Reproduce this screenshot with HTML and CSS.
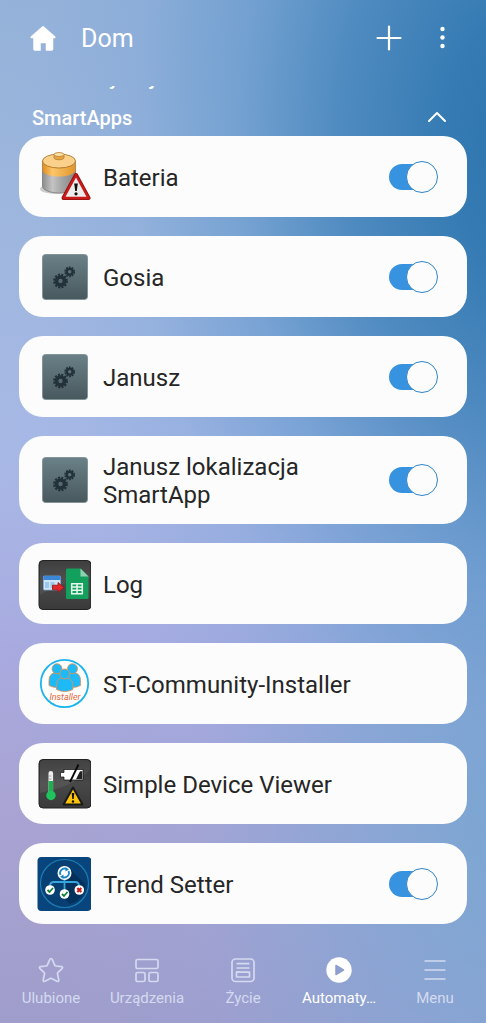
FILE: index.html
```html
<!DOCTYPE html>
<html lang="pl">

<head>
    <meta charset="UTF-8">
    <meta name="viewport" content="width=device-width, initial-scale=1.0">
    <title>Dom</title>
    <link rel="stylesheet" href="styles.css">
</head>

<body>
    <!-- shared icon parts -->
    <svg class="defs" width="0" height="0" aria-hidden="true">
        <defs>
            <linearGradient id="slate" x1="0" y1="0" x2="0" y2="1">
                <stop offset="0" stop-color="#6a8187" />
                <stop offset="1" stop-color="#48595e" />
            </linearGradient>
            <linearGradient id="dark" x1="0" y1="0" x2="0" y2="1">
                <stop offset="0" stop-color="#333" />
                <stop offset="0.5" stop-color="#484848" />
                <stop offset="1" stop-color="#3a3a3a" />
            </linearGradient>
            <linearGradient id="steel" x1="0" y1="0" x2="1" y2="0">
                <stop offset="0" stop-color="#8c8c8c" />
                <stop offset="0.3" stop-color="#c4c4c4" />
                <stop offset="0.6" stop-color="#a3a3a3" />
                <stop offset="1" stop-color="#858585" />
            </linearGradient>
            <linearGradient id="amber" x1="0" y1="0" x2="1" y2="0">
                <stop offset="0" stop-color="#e08c1c" />
                <stop offset="0.3" stop-color="#fbc66a" />
                <stop offset="1" stop-color="#e2952c" />
            </linearGradient>
            <symbol id="gears" viewBox="0 0 54 54">
                <rect x="5.500" y="4.500" width="45" height="45" rx="3" fill="url(#slate)" stroke="#839498" stroke-width="1" />
                <g fill="none" stroke="#22313a">
                    <circle cx="23.500" cy="31" r="4" stroke-width="3.600" />
                    <circle cx="23.500" cy="31" r="6.300" stroke-width="2.200" stroke-dasharray="2.100 1.200" />
                    <circle cx="32.700" cy="21.800" r="2.900" stroke-width="2.300" />
                    <circle cx="32.700" cy="21.800" r="4.500" stroke-width="1.800" stroke-dasharray="1.800 1.030" />
                </g>
            </symbol>
        </defs>
    </svg>

    <header class="topbar">
        <svg class="home" viewBox="0 0 26 26" aria-hidden="true">
            <path d="M13 1 L25 11.500 Q26 13 24.500 13 H23 V24 Q23 25.500 21.500 25.500 H16 V18 H10.500 V25.500 H5 Q3.500 25.500 3.500 24 V13 H1.500 Q0 13 1 11.500 Z" fill="#fff" stroke="#fff" stroke-width="0.500" stroke-linejoin="round" />
        </svg>
        <h1>Dom</h1>
        <button class="icon-btn" aria-label="Dodaj">
            <svg width="26" height="26" viewBox="0 0 26 26"><path d="M13 1.500v23M1.500 13h23" stroke="#fff" stroke-width="2.200" stroke-linecap="round" /></svg>
        </button>
        <button class="icon-btn" aria-label="Więcej opcji">
            <svg width="26" height="26" viewBox="0 0 26 26" fill="#fff"><circle cx="12.500" cy="4" r="2.200" /><circle cx="12.500" cy="12.500" r="2.200" /><circle cx="12.500" cy="21" r="2.200" /></svg>
        </button>
    </header>

    <main>
        <!-- heading scrolled under the top bar -->
        <div class="scrolled"><h2>Automatyzacje</h2></div>

        <div class="section-head">
            <h2>SmartApps</h2>
            <button class="icon-btn" aria-label="Zwiń">
                <svg width="26" height="26" viewBox="0 0 26 26"><path d="M5 16l8-8 8 8" fill="none" stroke="#fff" stroke-width="2" stroke-linecap="round" stroke-linejoin="round" /></svg>
            </button>
        </div>

        <ul class="apps">
            <li class="card">
                <svg class="app-icon" viewBox="0 0 54 54" aria-hidden="true">
                    <ellipse cx="19" cy="39" rx="16" ry="5" fill="#ccc" />
                    <path d="M5.500 11v25c0 4 7.500 7 16.500 7s16.500-3 16.500-7V11z" fill="url(#steel)" stroke="#777" stroke-width="0.800" />
                    <path d="M5.500 11v9c0 4 7.500 6.500 16.500 6.500s16.500-2.500 16.500-6.500V11z" fill="url(#amber)" />
                    <ellipse cx="22" cy="11" rx="16.500" ry="7" fill="#fbd391" stroke="#a36a1c" stroke-width="0.800" />
                    <ellipse cx="22" cy="11" rx="14.500" ry="5.500" fill="#fad08a" />
                    <path d="M17 4.500v3c0 3 10 3 10 0v-3z" fill="#e9a443" stroke="#a8701f" stroke-width="0.700" />
                    <ellipse cx="22" cy="4.500" rx="5" ry="2" fill="#fde0a8" stroke="#a8701f" stroke-width="0.700" />
                    <path d="M39 25L51.500 48H26.500z" fill="#f2f2f2" stroke="#8e1010" stroke-width="4" stroke-linejoin="round" />
                    <path d="M39 25L51.500 48H26.500z" fill="#ececec" stroke="#c91a1a" stroke-width="2.500" stroke-linejoin="round" />
                    <path d="M37.200 33.500h3.600l-1 7.500h-1.600z" fill="#111" />
                    <circle cx="39" cy="43.800" r="1.600" fill="#111" />
                </svg>
                <label class="name" for="bateria">Bateria</label>
                <input class="switch" type="checkbox" id="bateria" checked>
            </li>
            <li class="card">
                <svg class="app-icon" aria-hidden="true"><use href="#gears" /></svg>
                <label class="name" for="gosia">Gosia</label>
                <input class="switch" type="checkbox" id="gosia" checked>
            </li>
            <li class="card">
                <svg class="app-icon" aria-hidden="true"><use href="#gears" /></svg>
                <label class="name" for="janusz">Janusz</label>
                <input class="switch" type="checkbox" id="janusz" checked>
            </li>
            <li class="card">
                <svg class="app-icon" aria-hidden="true"><use href="#gears" /></svg>
                <label class="name" for="lokalizacja">Janusz lokalizacja SmartApp</label>
                <input class="switch" type="checkbox" id="lokalizacja" checked>
            </li>
            <li class="card">
                <svg class="app-icon" viewBox="0 0 54 54" aria-hidden="true">
                    <rect x="2" y="3.500" width="52" height="49" rx="4" fill="url(#dark)" stroke="#222" />
                    <path d="M3 8q0-4 4-4h42q4 0 4 4v14Q30 22 3 38z" fill="#fff" opacity="0.060" />
                    <rect x="6.500" y="19" width="17" height="14" rx="1" fill="#cfe4f7" stroke="#7fb0dc" stroke-width="0.700" />
                    <path d="M6.500 19h17v4h-17z" fill="#3b86d6" />
                    <path d="M8 25h4v6H8zM13.500 25h4v6h-4z" fill="#9cc6ec" />
                    <path d="M15.500 28.200h5.500V25.500l6 5-6 5v-2.700h-5.500z" fill="#e3262b" stroke="#921114" stroke-width="0.800" />
                    <path d="M30.500 11.500h13l8 8v21q0 1.500-1.500 1.500H30.500q-1.500 0-1.500-1.500V13q0-1.500 1.500-1.500z" fill="#12a05c" />
                    <path d="M43.500 11.500l8 8h-8z" fill="#8ed1b1" />
                    <path d="M34.700 26.700h10.600v10H34.700zM34.700 30h10.600M34.700 33.300h10.600M40 26.700v10" fill="none" stroke="#e9f7ef" stroke-width="1.500" />
                </svg>
                <span class="name">Log</span>
            </li>
            <li class="card">
                <svg class="app-icon" viewBox="0 0 54 54" aria-hidden="true">
                    <circle cx="27.500" cy="26.500" r="23.700" fill="#fff" stroke="#1eb4ee" stroke-width="1.800" />
                    <g fill="#1ebaf7" stroke="#d9935a" stroke-width="0.900">
                        <path d="M12 28.500v-5q0-8 8-8t8 8v5q-8 4-16 0z" />
                        <path d="M27.500 28.500v-5q0-8 8-8t8 8v5q-8 4-16 0z" />
                        <circle cx="20" cy="11.800" r="5" />
                        <circle cx="35.500" cy="11.800" r="5" />
                        <path d="M19.500 32.500v-4q0-8 8.200-8t8.200 8v4q-8.200 4-16.400 0z" />
                        <circle cx="27.700" cy="17" r="5" />
                    </g>
                    <text class="installer" x="28" y="43" text-anchor="middle">Installer</text>
                </svg>
                <span class="name">ST-Community-Installer</span>
            </li>
            <li class="card">
                <svg class="app-icon" viewBox="0 0 54 54" aria-hidden="true">
                    <rect x="2" y="2.500" width="52" height="48.500" rx="4" fill="url(#dark)" stroke="#222" />
                    <path d="M3 7q0-4 4-4h42q4 0 4 4v6Q36 30 3 36z" fill="#fff" opacity="0.070" />
                    <path d="M11.500 16q0-2 2.300-2t2.300 2v19h-4.600z" fill="#eee" />
                    <path d="M11.500 24h4.600v12h-4.600z" fill="#1fae54" />
                    <path d="M11.500 19h3M11.500 22h3" stroke="#999" stroke-width="0.800" />
                    <circle cx="14" cy="38.500" r="4.700" fill="#1fc45e" />
                    <path d="M27 12.500h19v10.500H27v-3h-3.500v-4.500H27z" fill="#fff" stroke="#111" stroke-width="0.700" />
                    <path d="M39 22.300l4-8h2.300v8z" fill="#222" />
                    <path d="M41.500 7.500L33 25" stroke="#080808" stroke-width="1.800" />
                    <path d="M36 30.500L45.500 47.500H26.500z" fill="#fdc30c" stroke="#1a1a1a" stroke-width="2" stroke-linejoin="round" />
                    <path d="M34.700 36h2.600l-0.600 6h-1.400z" fill="#111" />
                    <circle cx="36" cy="44.500" r="1.200" fill="#111" />
                </svg>
                <span class="name">Simple Device Viewer</span>
            </li>
            <li class="card">
                <svg class="app-icon" viewBox="0 0 54 54" aria-hidden="true">
                    <rect x="0.500" y="0" width="54" height="54" rx="4" fill="#08457d" />
                    <circle cx="27.500" cy="26.500" r="24" fill="#073f72" stroke="#1b7fb5" stroke-width="1.200" />
                    <path d="M33 12L49 28Q47 42 33 47L24 38 28 24z" fill="#04305c" />
                    <path d="M27.500 20v13M27.500 25H17q-4 0-4 4v2M27.500 25H38q4 0 4 4v2" fill="none" stroke="#35a5dc" stroke-width="1.800" />
                    <circle cx="27.500" cy="16" r="7" fill="#fff" />
                    <path d="M23.500 18a4.500 4.500 0 0 1 6-6M31.500 14a4.500 4.500 0 0 1-6 6" fill="none" stroke="#1c84c6" stroke-width="1.800" />
                    <path d="M28.500 10l3.500 2.500-3.500 2zM26.500 17.500l-3.500 2.300 3.500 2.200z" fill="#1c84c6" />
                    <circle cx="13" cy="33" r="4.800" fill="#fff" />
                    <circle cx="27.500" cy="37" r="4.800" fill="#fff" />
                    <circle cx="42.300" cy="33" r="4.800" fill="#fff" />
                    <path d="M10.500 33l2 2 3.500-4M25 37l2 2 3.500-4" fill="none" stroke="#13803a" stroke-width="1.800" />
                    <path d="M40.300 31l4 4M44.300 31l-4 4" stroke="#c41b1b" stroke-width="2.200" />
                </svg>
                <label class="name" for="trend">Trend Setter</label>
                <input class="switch" type="checkbox" id="trend" checked>
            </li>
        </ul>
    </main>

    <nav class="tabs">
        <a href="#">
            <svg viewBox="0 0 26 26"><path d="M13 1.500Q13.800 1.500 14.300 2.700L16.700 8.200Q17 8.900 17.700 9L23.500 9.700Q25.500 10 24 11.600L19.800 15.700Q19.300 16.200 19.500 17L20.800 23Q21 25.200 19 24.300L13.700 21.500Q13 21.200 12.300 21.500L7 24.300Q5 25.200 5.200 23L6.500 17Q6.700 16.200 6.200 15.700L2 11.600Q0.500 10 2.500 9.700L8.300 9Q9 8.900 9.300 8.200L11.700 2.700Q12.200 1.500 13 1.500z" /></svg>
            <span>Ulubione</span>
        </a>
        <a href="#">
            <svg viewBox="0 0 26 26"><rect x="2" y="2.500" width="22" height="9" rx="1.500" /><rect x="2" y="15.500" width="9" height="9" rx="1.500" /><rect x="15" y="15.500" width="9" height="9" rx="1.500" /></svg>
            <span>Urządzenia</span>
        </a>
        <a href="#">
            <svg viewBox="0 0 26 26"><rect x="2" y="2" width="22" height="22.500" rx="3.500" /><path d="M6.500 6.700h13M6.500 11h13M6.500 15.200h4" /><path d="M10.500 15.200h9v4.800h-13v-4.800z" stroke-linejoin="round" /></svg>
            <span>Życie</span>
        </a>
        <a href="#" class="active">
            <svg viewBox="0 0 26 26"><circle cx="13" cy="13" r="12.700" fill="#fff" stroke="none" /><path d="M10 8.500L17.500 13 10 17.500z" fill="#8d9fce" stroke="#8d9fce" stroke-width="1.500" stroke-linejoin="round" /></svg>
            <span>Automaty…</span>
        </a>
        <a href="#">
            <svg viewBox="0 0 26 26"><path d="M2.500 4h21M2.500 13h21M2.500 22h21" /></svg>
            <span>Menu</span>
        </a>
    </nav>
</body>

</html>
```
FILE: styles.css
```css
/* General Reset and Body Styling */
* {
    margin: 0;
    padding: 0;
    box-sizing: border-box;
}

body {
    min-height: 100vh;
    display: flex;
    flex-direction: column;
    font-family: Roboto, sans-serif;
    color: #fff;
    background:
        radial-gradient(ellipse 105% 72% at 112% 14%, #2a70ab 0%, rgba(46, 119, 176, 0.92) 20%, rgba(52, 124, 180, 0.72) 40%, rgba(66, 136, 190, 0.4) 60%, rgba(90, 150, 200, 0.14) 80%, rgba(110, 160, 205, 0) 100%),
        radial-gradient(ellipse 70% 42% at 110% 82%, rgba(118, 166, 208, 0.9), rgba(118, 166, 208, 0) 100%),
        linear-gradient(76deg, rgba(140, 172, 228, 0) 10%, rgba(140, 172, 228, 0.5) 80%),
        linear-gradient(#96b3d6 0%, #a2b9de 25%, #aab9e6 45%, #a9a9de 65%, #a8a3d2 80%, #9f9dcb 100%);
    background-repeat: no-repeat;
}

.defs {
    position: absolute;
}

ul {
    list-style: none;
}

/* Top bar */
.topbar {
    display: flex;
    align-items: center;
    height: 76px;
    padding: 0 30px;
    gap: 28px;
}

.topbar h1 {
    flex: 1;
    font-size: 25px;
    font-weight: 400;
    line-height: 32px;
    padding-top: 2px;
}

.home {
    width: 26px;
    height: 26px;
    margin-right: -3px;
}

.icon-btn {
    display: flex;
    border: none;
    background: none;
    cursor: pointer;
}

/* Section heading */
main {
    padding: 0 19px;
}

.scrolled {
    display: flex;
    align-items: flex-end;
    height: 16px;
    padding: 0 13px;
    clip-path: inset(10px 0 0 0);
}

main h2 {
    font-size: 20px;
    font-weight: 500;
    line-height: 28px;
}

.section-head {
    display: flex;
    justify-content: space-between;
    align-items: center;
    height: 44px;
    padding: 8px 17px 0 13px;
}

/* SmartApp cards */
.apps {
    display: flex;
    flex-direction: column;
    gap: 19px;
}

.card {
    display: flex;
    align-items: center;
    gap: 12px;
    min-height: 81px;
    padding: 13px 29px 13px 18px;
    border-radius: 24px;
    background: #fcfcfc;
    color: #262626;
}

.app-icon {
    flex: none;
    width: 54px;
    height: 54px;
}

.installer {
    font: italic 9px Roboto, sans-serif;
    fill: #e2663c;
}

.name {
    flex: 1;
    font-size: 24px;
    line-height: 28px;
    padding: 4px 0 2px;
}

/* Toggle switch */
.switch {
    appearance: none;
    flex: none;
    display: flex;
    align-items: center;
    justify-content: flex-end;
    width: 49px;
    height: 26px;
    border-radius: 15px;
    background: linear-gradient(90deg, #3793df 70%, transparent 70%);
    cursor: pointer;
}

.switch::before {
    content: "";
    flex: none;
    width: 30px;
    height: 30px;
    border: 1px solid #3185c8;
    border-radius: 50%;
    background: #fcfcfc;
}

.switch:not(:checked) {
    justify-content: flex-start;
    background: #b5b5b5;
}

/* Bottom navigation */
.tabs {
    display: flex;
    margin-top: auto;
    padding: 16px 3px 15px;
}

.tabs a {
    flex: 1;
    min-width: 0;
    display: flex;
    flex-direction: column;
    align-items: center;
    gap: 5px;
    color: #d4daf0;
    text-decoration: none;
}

.tabs svg {
    width: 26px;
    height: 26px;
    fill: none;
    stroke: #d4daf0;
    stroke-width: 1.7;
}

.tabs span {
    font-size: 15px;
    line-height: 20px;
    white-space: nowrap;
}

.tabs .active {
    color: #fff;
}
```
